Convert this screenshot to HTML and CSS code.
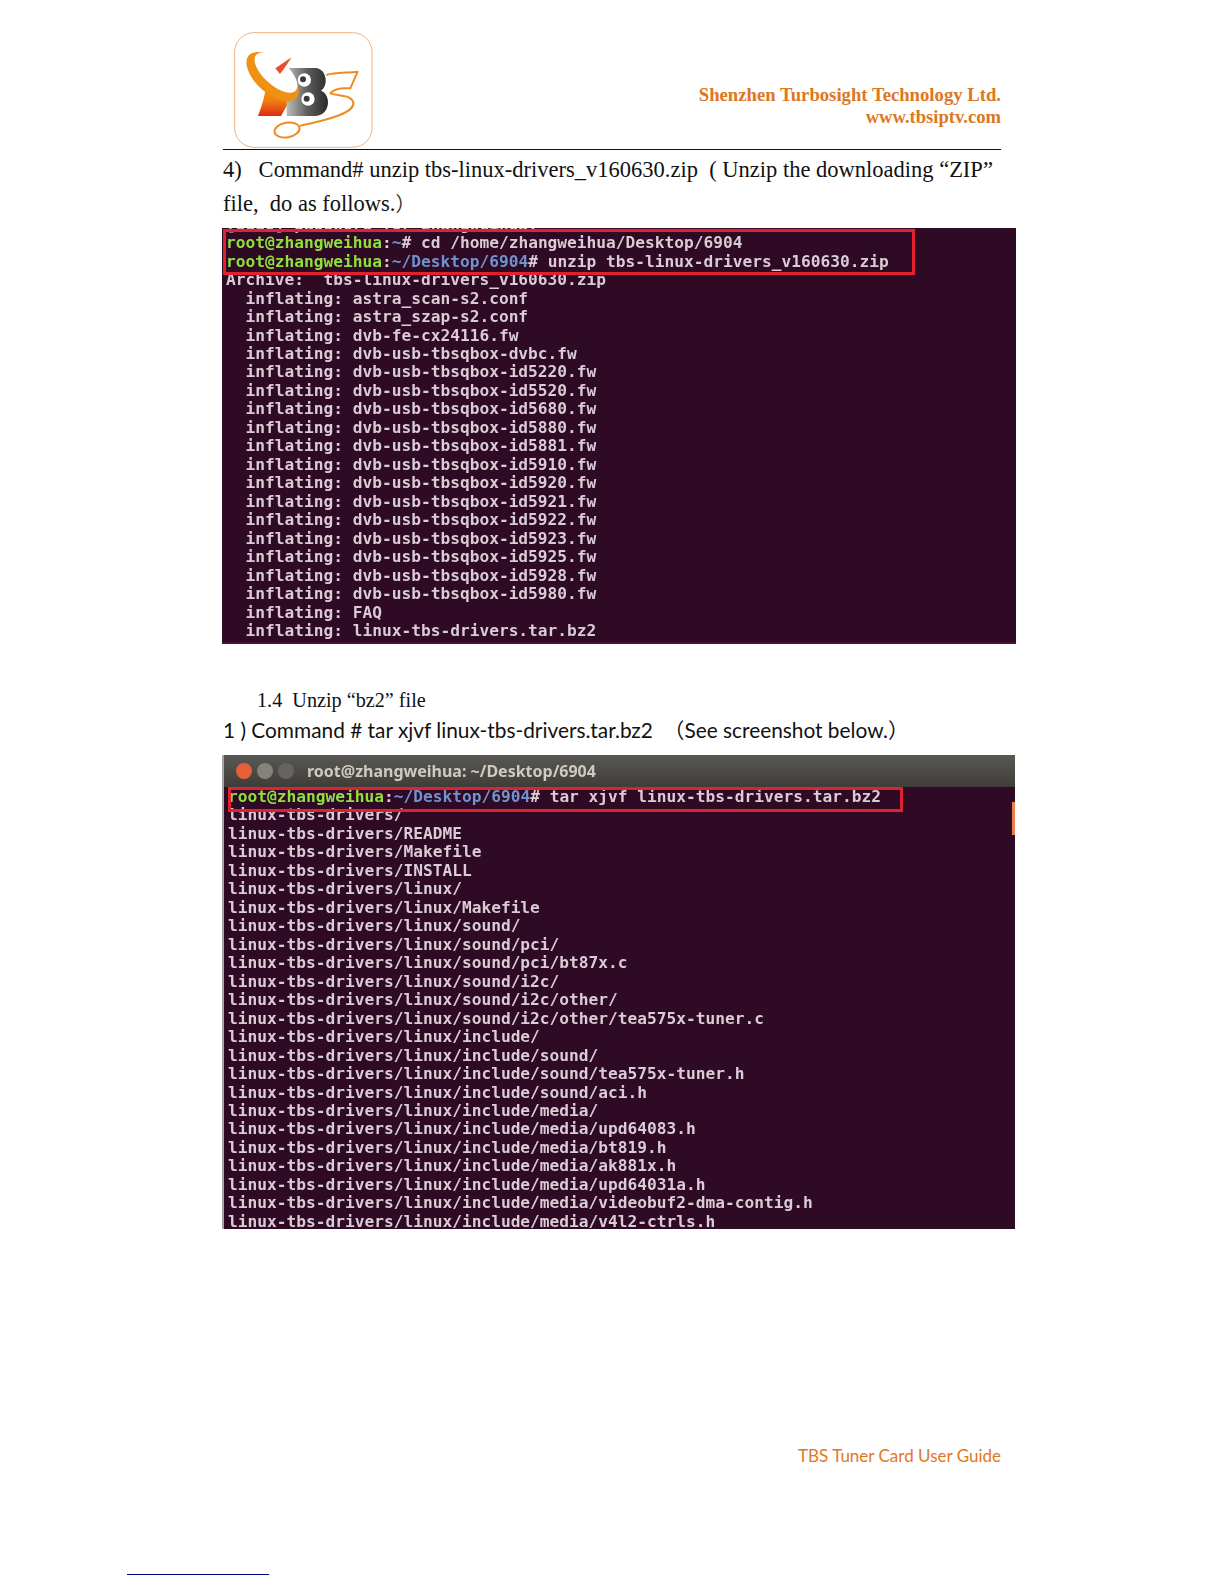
FILE: index.html
```html
<!DOCTYPE html>
<html lang="en">
<head>
<meta charset="utf-8">
<title>TBS Tuner Card User Guide</title>
<link rel="stylesheet" href="styles.css">
</head>
<body>
<div class="page">
  <main class="content">
    <header class="doc-head">
      <svg class="logo" viewBox="0 0 480 372" aria-label="TBS logo">
        <defs>
          <linearGradient id="standFill" x1="0" y1="0" x2="0" y2="1">
            <stop offset="0" stop-color="#f7a600"/>
            <stop offset=".55" stop-color="#ef7d10"/>
            <stop offset="1" stop-color="#dd2a14"/>
          </linearGradient>
          <linearGradient id="bFill" x1="0" y1="0" x2="1" y2="0">
            <stop offset="0" stop-color="#bdbdbb"/>
            <stop offset=".5" stop-color="#5d5d5b"/>
            <stop offset="1" stop-color="#2b2b2b"/>
          </linearGradient>
        </defs>
        <rect x="29" y="23" width="412" height="344" rx="58" fill="#fff" stroke="#f2b07c" stroke-width="3"/>
        <path d="M125 175 L195 225 L168 273 L99 273 C112 240 120 210 125 175Z" fill="url(#standFill)"/>
        <path d="M185 129 L272 129 C305 131 312 182 288 197 C318 206 320 272 268 273 L185 273Z" fill="url(#bFill)"/>
        <ellipse cx="143" cy="155" rx="96" ry="50" transform="rotate(42 143 155)" fill="#ef9214"/>
        <ellipse cx="153" cy="143" rx="80" ry="37" transform="rotate(42 153 143)" fill="#fff"/>
        <path d="M151 130 L200 97 L178 130 L165 147Z" fill="#e4502a"/>
        <circle cx="238" cy="165" r="20" fill="#fff"/>
        <circle cx="234" cy="163" r="9" fill="#3a3a38"/>
        <circle cx="249" cy="222" r="20" fill="#fff"/>
        <circle cx="245" cy="221" r="9" fill="#3a3a38"/>
        <path d="M304 150 C330 142 365 144 398 140 L376 190 C350 188 325 192 316 205 C340 214 378 208 385 232 C390 262 320 283 225 302" fill="none" stroke="#ee8d1f" stroke-width="6" stroke-linejoin="round"/>
        <ellipse cx="186" cy="315" rx="38" ry="22" transform="rotate(-10 186 315)" fill="#fff" stroke="#ee8d1f" stroke-width="6"/>
      </svg>
      <div class="company">
        <div class="company-name">Shenzhen Turbosight Technology Ltd.</div>
        <div class="company-url">www.tbsiptv.com</div>
      </div>
    </header>
    <hr class="rule">
    <p class="para">4)   Command# unzip tbs-linux-drivers_v160630.zip  ( Unzip the downloading “ZIP”
file,  do as follows.<span class="cjk-paren">）</span></p>

    <figure class="term term-one">
<pre class="term-text term-text-one">[sudo] password for zhangweihua:
<span class="g">root@zhangweihua</span>:<span class="b">~</span># cd /home/zhangweihua/Desktop/6904
<span class="g">root@zhangweihua</span>:<span class="b">~/Desktop/6904</span># unzip tbs-linux-drivers_v160630.zip
Archive:  tbs-linux-drivers_v160630.zip
  inflating: astra_scan-s2.conf
  inflating: astra_szap-s2.conf
  inflating: dvb-fe-cx24116.fw
  inflating: dvb-usb-tbsqbox-dvbc.fw
  inflating: dvb-usb-tbsqbox-id5220.fw
  inflating: dvb-usb-tbsqbox-id5520.fw
  inflating: dvb-usb-tbsqbox-id5680.fw
  inflating: dvb-usb-tbsqbox-id5880.fw
  inflating: dvb-usb-tbsqbox-id5881.fw
  inflating: dvb-usb-tbsqbox-id5910.fw
  inflating: dvb-usb-tbsqbox-id5920.fw
  inflating: dvb-usb-tbsqbox-id5921.fw
  inflating: dvb-usb-tbsqbox-id5922.fw
  inflating: dvb-usb-tbsqbox-id5923.fw
  inflating: dvb-usb-tbsqbox-id5925.fw
  inflating: dvb-usb-tbsqbox-id5928.fw
  inflating: dvb-usb-tbsqbox-id5980.fw
  inflating: FAQ
  inflating: linux-tbs-drivers.tar.bz2</pre>
      <div class="redbox redbox-one"></div>
    </figure>

    <h2 class="subhead">1.4  Unzip “bz2” file</h2>
    <p class="cmd">1 ) Command # tar xjvf linux-tbs-drivers.tar.bz2  （See screenshot below.）</p>

    <figure class="term term-two">
      <div class="titlebar">
        <span class="dot dot-close"></span>
        <span class="dot dot-min"></span>
        <span class="dot dot-max"></span>
        <span class="title-text">root@zhangweihua: ~/Desktop/6904</span>
      </div>
      <div class="term-body">
<pre class="term-text term-text-two"><span class="g">root@zhangweihua</span>:<span class="b">~/Desktop/6904</span># tar xjvf linux-tbs-drivers.tar.bz2
linux-tbs-drivers/
linux-tbs-drivers/README
linux-tbs-drivers/Makefile
linux-tbs-drivers/INSTALL
linux-tbs-drivers/linux/
linux-tbs-drivers/linux/Makefile
linux-tbs-drivers/linux/sound/
linux-tbs-drivers/linux/sound/pci/
linux-tbs-drivers/linux/sound/pci/bt87x.c
linux-tbs-drivers/linux/sound/i2c/
linux-tbs-drivers/linux/sound/i2c/other/
linux-tbs-drivers/linux/sound/i2c/other/tea575x-tuner.c
linux-tbs-drivers/linux/include/
linux-tbs-drivers/linux/include/sound/
linux-tbs-drivers/linux/include/sound/tea575x-tuner.h
linux-tbs-drivers/linux/include/sound/aci.h
linux-tbs-drivers/linux/include/media/
linux-tbs-drivers/linux/include/media/upd64083.h
linux-tbs-drivers/linux/include/media/bt819.h
linux-tbs-drivers/linux/include/media/ak881x.h
linux-tbs-drivers/linux/include/media/upd64031a.h
linux-tbs-drivers/linux/include/media/videobuf2-dma-contig.h
linux-tbs-drivers/linux/include/media/v4l2-ctrls.h</pre>
        <div class="scroll-thumb"></div>
      </div>
      <div class="redbox redbox-two"></div>
    </figure>

    <footer class="guide-name">TBS Tuner Card User Guide</footer>
  </main>
  <div class="note-rule"></div>
</div>
</body>
</html>
```

FILE: styles.css
```css
* { box-sizing: border-box; }
html, body { margin: 0; padding: 0; background: #fff; }
.page { width: 1224px; height: 1584px; overflow: hidden; }
.content { margin-left: 222px; width: 794px; }

.doc-head { display: flex; justify-content: space-between; height: 149px; padding-top: 25px; width: 779px; }
.logo { display: block; width: 160px; height: 124px; margin-left: 3px; }
.company { text-align: right; padding-top: 59px; font-family: "Liberation Serif", serif; font-weight: 700; color: #dd7722; }
.company-name { font-size: 18.7px; line-height: 22px; }
.company-url { font-size: 18.6px; line-height: 21px; }

.rule { border: 0; height: 1px; background: #111; margin: 0 0 0 1px; width: 778px; }
.para { margin: 3px 0 7px 1px; font: 22.5px/34px "Liberation Serif", "Noto Sans CJK SC", serif; white-space: pre; color: #111; }
.cjk-paren { font-size: 20px; color: #333; }

.term { position: relative; margin: 0; width: 794px; overflow: hidden; background: #2f0a25; }
.term-one { height: 416px; border-bottom: 2px solid #4a1436; }
.term-two { height: 474px; width: 793px; margin-top: 10px; border-left: 2px solid #a8a4a4; }
.term-text { margin: 0; font: 700 16.2px/18.47px "DejaVu Sans Mono", monospace; color: #d9ccd4; filter: blur(.6px); }
.term-text-one { margin-top: -12.3px; padding-left: 4px; }
.term-text-two { padding-left: 4px; margin-top: 1px; }
.g { color: #8ee03a; }
.b { color: #6f93cf; }

.redbox { position: absolute; border: 3px solid #e0212f; }
.redbox-one { left: 1px; top: 1px; width: 692px; height: 46px; }
.redbox-two { left: 4px; top: 32px; width: 675px; height: 25px; }

.titlebar { height: 32px; display: flex; align-items: center; background: linear-gradient(#5a5853, #3e3d39); filter: blur(.5px); }
.dot { width: 16px; height: 16px; border-radius: 50%; background: #6a6864; margin-right: 5px; }
.dot-close { margin-left: 12px; background: #e8603a; }
.dot-min { background: #85827c; }
.dot-max { background: #66645f; margin-right: 13px; }
.title-text { font: 700 16px/20px "Noto Sans", sans-serif; color: #cfc9c0; }
.term-body { position: relative; height: 442px; overflow: hidden; }
.scroll-thumb { position: absolute; right: 0; top: 15px; width: 3px; height: 33px; background: #e8804e; }

.subhead { margin: 41px 0 0 35px; font: 400 20.2px/30px "Liberation Serif", serif; white-space: pre; color: #111; }
.cmd { margin: 0 0 0 1px; font: 20.85px/30px Lato, "Noto Sans CJK SC", sans-serif; white-space: pre; color: #111; }

.guide-name { margin-top: 215px; width: 779px; text-align: right; font: 17px/24px Lato, sans-serif; color: #e2761f; }
.note-rule { margin: 106px 0 0 127px; width: 142px; height: 1px; background: #000080; }
```
